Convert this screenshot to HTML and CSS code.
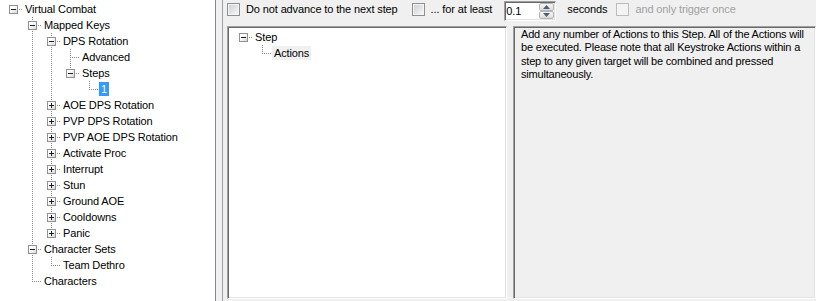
FILE: index.html
```html
<!DOCTYPE html>
<html lang="en">
  <head>
    <meta charset="UTF-8" />
    <title>Virtual Combat</title>
    <link rel="stylesheet" href="styles.css">
  </head>
  <body>
    <div class="nav">
      <div class="row"><span class="c h"><i class="box minus"></i></span><span class="lbl">Virtual Combat</span></div>
      <div class="row"><span class="g"></span><span class="c t h"><i class="box minus"></i></span><span class="lbl">Mapped Keys</span></div>
      <div class="row"><span class="g"></span><span class="g v"></span><span class="c t h"><i class="box minus"></i></span><span class="lbl">DPS Rotation</span></div>
      <div class="row"><span class="g"></span><span class="g v"></span><span class="g v"></span><span class="c t h"></span><span class="lbl">Advanced</span></div>
      <div class="row"><span class="g"></span><span class="g v"></span><span class="g v"></span><span class="c l h"><i class="box minus"></i></span><span class="lbl">Steps</span></div>
      <div class="row"><span class="g"></span><span class="g v"></span><span class="g v"></span><span class="g"></span><span class="c l h"></span><span class="lbl sel">1</span></div>
      <div class="row"><span class="g"></span><span class="g v"></span><span class="c t h"><i class="box plus"></i></span><span class="lbl">AOE DPS Rotation</span></div>
      <div class="row"><span class="g"></span><span class="g v"></span><span class="c t h"><i class="box plus"></i></span><span class="lbl">PVP DPS Rotation</span></div>
      <div class="row"><span class="g"></span><span class="g v"></span><span class="c t h"><i class="box plus"></i></span><span class="lbl">PVP AOE DPS Rotation</span></div>
      <div class="row"><span class="g"></span><span class="g v"></span><span class="c t h"><i class="box plus"></i></span><span class="lbl">Activate Proc</span></div>
      <div class="row"><span class="g"></span><span class="g v"></span><span class="c t h"><i class="box plus"></i></span><span class="lbl">Interrupt</span></div>
      <div class="row"><span class="g"></span><span class="g v"></span><span class="c t h"><i class="box plus"></i></span><span class="lbl">Stun</span></div>
      <div class="row"><span class="g"></span><span class="g v"></span><span class="c t h"><i class="box plus"></i></span><span class="lbl">Ground AOE</span></div>
      <div class="row"><span class="g"></span><span class="g v"></span><span class="c t h"><i class="box plus"></i></span><span class="lbl">Cooldowns</span></div>
      <div class="row"><span class="g"></span><span class="g v"></span><span class="c l h"><i class="box plus"></i></span><span class="lbl">Panic</span></div>
      <div class="row"><span class="g"></span><span class="c t h"><i class="box minus"></i></span><span class="lbl">Character Sets</span></div>
      <div class="row"><span class="g"></span><span class="g v"></span><span class="c l h"></span><span class="lbl">Team Dethro</span></div>
      <div class="row"><span class="g"></span><span class="c l h"></span><span class="lbl">Characters</span></div>
    </div>

    <div class="main">
      <div class="opts">
        <span class="chk"></span>
        <span class="txt">Do not advance to the next step</span>
        <span class="chk second"></span>
        <span class="txt">... for at least</span>
        <span class="num">
          <span class="val">0.1</span>
          <span class="spin">
            <span class="arrow"><svg width="7" height="4" viewBox="0 0 7 4"><path d="M3.5 0 L7 4 L0 4 Z" fill="#4d5d73"/></svg></span>
            <span class="arrow"><svg width="7" height="4" viewBox="0 0 7 4"><path d="M0 0 L7 0 L3.5 4 Z" fill="#4d5d73"/></svg></span>
          </span>
        </span>
        <span class="txt sec">seconds</span>
        <span class="chk off"></span>
        <span class="txt dim">and only trigger once</span>
      </div>

      <div class="panes">
        <div class="steptree sunken">
          <div class="row"><span class="c h"><i class="box minus"></i></span><span class="lbl">Step</span></div>
          <div class="row"><span class="g"></span><span class="c l h"></span><span class="lbl idle">Actions</span></div>
        </div>
        <div class="desc sunken">
          Add any number of Actions to this Step. All of the Actions will<br>
          be executed. Please note that all Keystroke Actions within a<br>
          step to any given target will be combined and pressed<br>
          simultaneously.
        </div>
      </div>
    </div>
  </body>
</html>
```

FILE: styles.css
```css
html,
body {
  height: 100%;
}

body {
  margin: 0;
  display: flex;
  overflow: hidden;
  background-color: #f0f0f0;
  font-family: "Liberation Sans", Arial, sans-serif;
  font-size: 11px;
  letter-spacing: -0.12px;
  color: #000;
}

/* left tree */
.nav {
  width: 216px;
  flex: none;
  box-sizing: border-box;
  background-color: #fff;
  border-right: 1px solid #828790;
  padding: 1px 0 0 4px;
}

.row {
  display: flex;
  align-items: center;
  height: 16px;
}

.g,
.c {
  position: relative;
  flex: none;
  width: 19px;
  height: 16px;
}

.g.v::before,
.c.t::before,
.c.l::before {
  content: "";
  position: absolute;
  left: 9px;
  top: 0;
  width: 1px;
  height: 16px;
  background: repeating-linear-gradient(to bottom, #8c8c8c 0 1px, transparent 1px 2px);
}

.c.l::before {
  height: 9px;
}

.c.h::after {
  content: "";
  position: absolute;
  left: 9px;
  top: 8px;
  width: 10px;
  height: 1px;
  background: repeating-linear-gradient(to right, #8c8c8c 0 1px, transparent 1px 2px);
}

.box {
  position: absolute;
  left: 5px;
  top: 4px;
  z-index: 1;
  width: 9px;
  height: 9px;
  box-sizing: border-box;
  border: 1px solid #919191;
  background: linear-gradient(135deg, #fff 35%, #d6d6d6);
}

.box::before {
  content: "";
  position: absolute;
  left: 1px;
  top: 3px;
  width: 5px;
  height: 1px;
  background-color: #1c1c2c;
}

.box.plus::after {
  content: "";
  position: absolute;
  left: 3px;
  top: 1px;
  width: 1px;
  height: 5px;
  background-color: #1c1c2c;
}

.lbl {
  padding: 0 2px;
  line-height: 14px;
  white-space: nowrap;
}

.lbl.sel {
  background-color: #3399ff;
  color: #fff;
}

.lbl.idle {
  background-color: #f0f0f0;
}

/* right side */
.main {
  flex: 1;
  min-width: 0;
  display: flex;
  flex-direction: column;
  margin-left: 6px;
  border-left: 1px solid #a0a0a0;
  padding: 0 0 2px 4px;
}

.opts {
  display: flex;
  align-items: flex-start;
  height: 26px;
  flex: none;
  box-sizing: border-box;
  padding-top: 3px;
  white-space: nowrap;
}

.chk {
  flex: none;
  width: 13px;
  height: 13px;
  box-sizing: border-box;
  border: 1px solid #8e8f8f;
  background: linear-gradient(135deg, #c9ccd1, #fbfbfb);
  box-shadow: inset 0 0 0 1px #f4f4f4;
}

.chk.second {
  margin-left: 14px;
}

.chk.off {
  margin-left: 9px;
  border-color: #bcbcbc;
  background: #f4f4f4;
  box-shadow: none;
}

.txt {
  margin-left: 6px;
  line-height: 13px;
}

.txt.sec {
  margin-left: 11px;
}

.txt.dim {
  color: #a0a0a0;
}

.num {
  display: flex;
  flex: none;
  width: 52px;
  height: 20px;
  margin: -2px 0 0 12px;
  box-sizing: border-box;
  border: 1px solid;
  border-color: #a0a0a0 #fff #fff #a0a0a0;
  box-shadow: inset 1px 1px 0 #696969, inset -1px -1px 0 #e3e3e3;
  background-color: #fff;
}

.val {
  flex: 1;
  padding-left: 1px;
  line-height: 18px;
}

.spin {
  display: flex;
  flex-direction: column;
  width: 15px;
  padding: 1px 1px 1px 0;
}

.arrow {
  flex: 1;
  display: flex;
  align-items: center;
  justify-content: center;
  border: 1px solid #b5b5b5;
  border-radius: 2px;
  background: linear-gradient(#f6f6f6, #dcdcdc);
}

.panes {
  flex: 1;
  min-height: 0;
  display: flex;
  gap: 6px;
}

.sunken {
  box-sizing: border-box;
  border: 1px solid;
  border-color: #a0a0a0 #fff #fff #a0a0a0;
  box-shadow: inset 1px 1px 0 #696969, inset -1px -1px 0 #e3e3e3;
}

.steptree {
  width: 280px;
  flex: none;
  background-color: #fff;
  padding: 2px 0 0 6px;
}

.desc {
  flex: 1;
  padding: 1px 5px 0 7px;
  line-height: 13.3px;
  letter-spacing: -0.19px;
  white-space: nowrap;
}
```
